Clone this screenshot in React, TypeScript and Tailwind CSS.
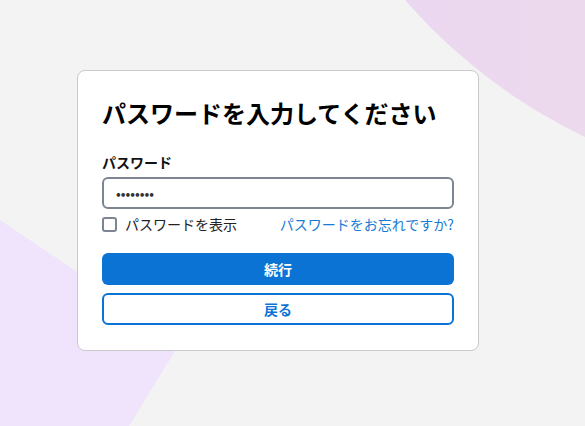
import { useState } from 'react';

const Backdrop = () => (
  <svg
    className="absolute inset-0 w-full h-full pointer-events-none"
    viewBox="0 0 585 426"
    preserveAspectRatio="none"
  >
    <defs>
      <linearGradient id="pinkBlob" x1="0" y1="0" x2="1" y2="0">
        <stop offset="0" stopColor="#ead6f2" />
        <stop offset="1" stopColor="#f2e2e2" />
      </linearGradient>
    </defs>
    <circle cx="824" cy="-364" r="555" fill="url(#pinkBlob)" />
    <path d="M0 220 L168 333 Q180 342 172 356 L129 426 L0 426 Z" fill="#f0e4fd" />
  </svg>
);

export default function App() {
  const [show, setShow] = useState(false);

  return (
    <div
      className="relative w-full h-[426px] overflow-hidden bg-[#f3f3f3]"
      style={{ fontFamily: '"Noto Sans CJK JP", "Noto Sans", sans-serif' }}
    >
      <Backdrop />
      <div className="relative pt-[70px] pl-[77px]">
        <div className="w-[402px] h-[281px] bg-white border border-[#c9c9cc] rounded-lg px-6 pt-[24px]">
          <h1 className="text-[24px] leading-[36px] font-bold text-black">
            パスワードを入力してください
          </h1>

          <label className="block mt-[21px] text-[14px] leading-[20px] font-semibold text-[#111]">
            パスワード
          </label>
          <input
            type={show ? 'text' : 'password'}
            defaultValue="abcdefgh"
            className="mt-[5px] w-full h-[32px] rounded-md border-2 border-[#7d8593] px-3 text-[14px] text-[#333] outline-none"
          />

          <div className="mt-[5px] flex items-center justify-between h-[20px]">
            <label className="flex items-center gap-2 text-[14px] text-[#222] cursor-pointer">
              <input
                type="checkbox"
                checked={show}
                onChange={(e) => setShow(e.target.checked)}
                className="appearance-none w-[15px] h-[15px] rounded-[3px] border-2 border-[#7d8593] bg-white"
              />
              パスワードを表示
            </label>
            <a href="#" className="text-[14px] text-[#1a7bd3] hover:underline">
              パスワードをお忘れですか?
            </a>
          </div>

          <button className="mt-[19px] w-full h-[32px] rounded-md bg-[#0b73d4] text-white text-[14px] font-bold">
            続行
          </button>
          <button className="mt-[8px] w-full h-[32px] rounded-md border-2 border-[#0b73d4] bg-white text-[#0b73d4] text-[14px] font-bold">
            戻る
          </button>
        </div>
      </div>
    </div>
  );
}
